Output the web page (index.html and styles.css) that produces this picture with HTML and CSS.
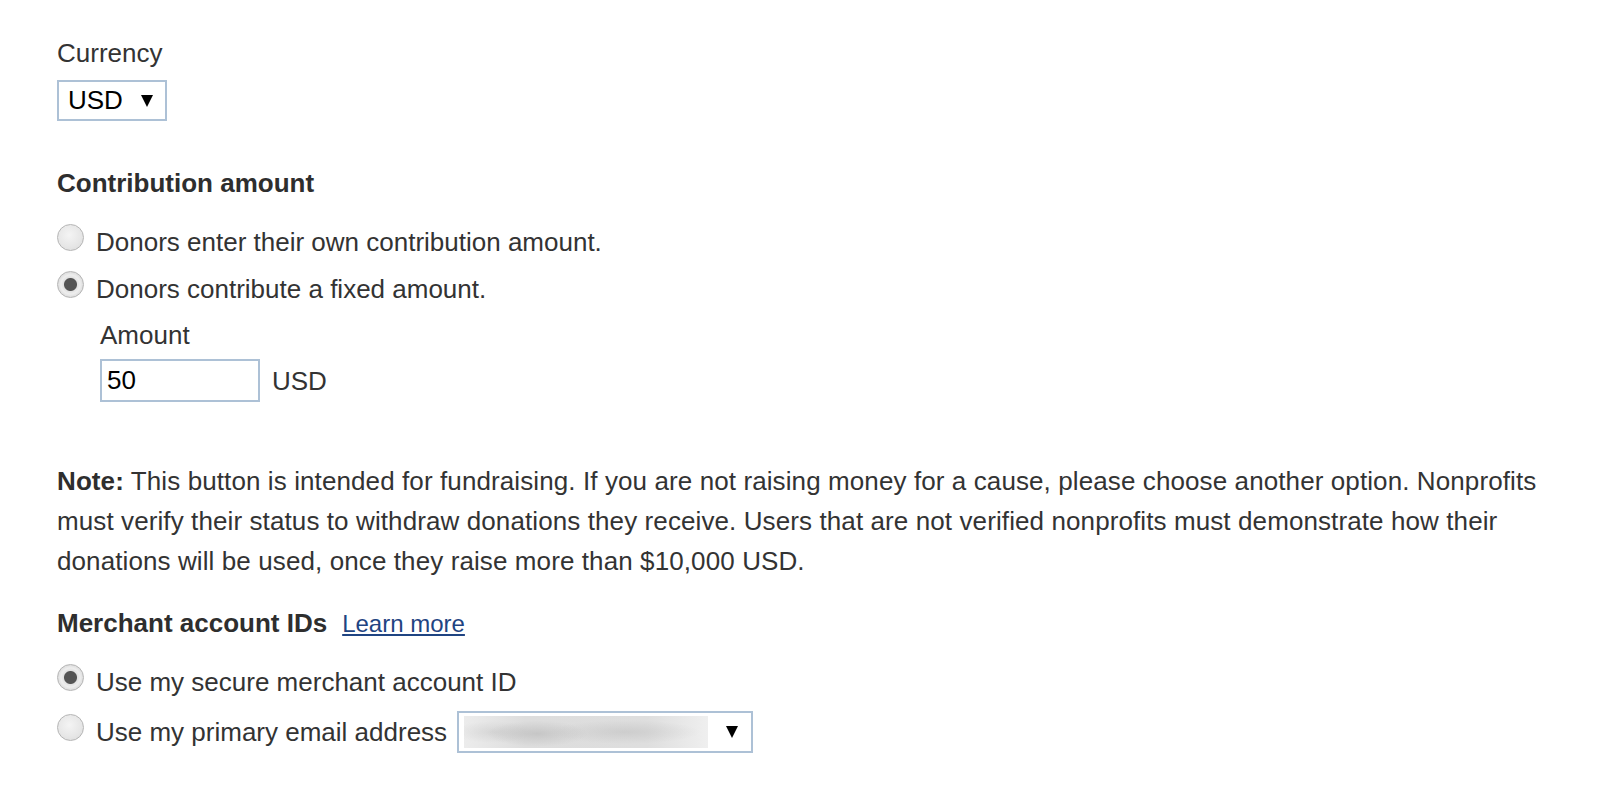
FILE: index.html
```html
<!DOCTYPE html>
<html lang="en">
<head>
<meta charset="utf-8">
<title>Donate button settings</title>
<link rel="stylesheet" href="styles.css">
</head>
<body>
<form class="form">
  <div class="field">
    <div class="label">Currency</div>
    <div class="select select-currency">
      <span class="select-value">USD</span>
      <span class="arrow"></span>
    </div>
  </div>

  <h3 class="heading heading-contrib">Contribution amount</h3>
  <label class="radio-row">
    <input class="radio" type="radio" name="amount">
    <span>Donors enter their own contribution amount.</span>
  </label>
  <label class="radio-row">
    <input class="radio" type="radio" name="amount" checked>
    <span>Donors contribute a fixed amount.</span>
  </label>

  <div class="amount">
    <div class="label">Amount</div>
    <div class="amount-row">
      <div class="text-input">50</div>
      <span class="unit">USD</span>
    </div>
  </div>

  <p class="note"><b>Note:</b> This button is intended for fundraising. If you are not raising money for a cause, please choose another option. Nonprofits must verify their status to withdraw donations they receive. Users that are not verified nonprofits must demonstrate how their donations will be used, once they raise more than $10,000 USD.</p>

  <div class="heading-row">
    <h3 class="heading">Merchant account IDs</h3>
    <a class="link" href="#">Learn more</a>
  </div>
  <label class="radio-row radio-row-first">
    <input class="radio" type="radio" name="merchant" checked>
    <span>Use my secure merchant account ID</span>
  </label>
  <label class="radio-row radio-row-email">
    <input class="radio" type="radio" name="merchant">
    <span>Use my primary email address</span>
    <div class="select select-email">
      <span class="blurred"></span>
      <span class="arrow"></span>
    </div>
  </label>
</form>
</body>
</html>
```

FILE: styles.css
```css
html, body {
  margin: 0;
  padding: 0;
  background: #ffffff;
}

body {
  font-family: "Liberation Sans", Arial, sans-serif;
  font-size: 26px;
  line-height: 30px;
  color: #333333;
}

.form {
  padding: 38px 0 0 57px;
  display: flex;
  flex-direction: column;
  align-items: flex-start;
}

.label {
  line-height: 30px;
}

.select {
  box-sizing: border-box;
  display: flex;
  align-items: center;
  border: 2px solid #adc1d6;
  background: #ffffff;
  color: #000000;
}

.select-currency {
  margin-top: 12px;
  width: 110px;
  height: 41px;
  padding: 0 12px 0 9px;
}

.select-value {
  flex: 1;
  line-height: 37px;
}

.arrow {
  width: 0;
  height: 0;
  border-left: 6px solid transparent;
  border-right: 6px solid transparent;
  border-top: 12px solid #000000;
}

.heading {
  margin: 0;
  font-size: 26px;
  font-weight: bold;
  line-height: 30px;
  color: #2e2e2e;
}

.heading-contrib {
  margin-top: 47px;
  margin-bottom: 12px;
}

.radio-row {
  display: flex;
  align-items: center;
  margin-top: 17px;
  cursor: pointer;
}

.radio {
  appearance: none;
  -webkit-appearance: none;
  box-sizing: border-box;
  width: 27px;
  height: 27px;
  margin: -10px 12px 0 0;
  border-radius: 50%;
  border: 1px solid #b5b5b5;
  background: radial-gradient(circle at 45% 40%, #f4f4f4 0, #e6e6e6 60%, #d6d6d6 100%);
  flex: none;
}

.radio:checked {
  background:
    radial-gradient(circle at 50% 50%, #555555 0, #555555 6px, #e2e2e2 7px, #eeeeee 9.5px, #d8d8d8 13.5px);
}

.amount {
  margin: 16px 0 0 43px;
}

.amount-row {
  display: flex;
  align-items: center;
  margin-top: 9px;
}

.text-input {
  box-sizing: border-box;
  width: 160px;
  height: 43px;
  padding-left: 5px;
  border: 2px solid #adc1d6;
  line-height: 39px;
  color: #000000;
}

.unit {
  margin-left: 12px;
}

.note {
  margin: 59px 0 0;
  max-width: 1500px;
  line-height: 40px;
  letter-spacing: 0.1px;
}

.note b {
  color: #2e2e2e;
}

.heading-row {
  display: flex;
  align-items: baseline;
  margin-top: 27px;
  margin-bottom: 11px;
}

.link {
  margin-left: 15px;
  font-size: 24px;
  color: #1f4482;
  text-decoration: underline;
}

.radio-row-email {
  margin-top: 14px;
}

.select-email {
  margin-left: 10px;
  width: 296px;
  height: 42px;
  padding: 3px 13px 3px 5px;
  align-items: stretch;
}

.select-email .arrow {
  align-self: center;
  margin-left: 18px;
}

.blurred {
  flex: 1;
  background:
    radial-gradient(ellipse 50px 13px at 30% 55%, rgba(175,175,175,0.5), rgba(175,175,175,0) 100%),
    radial-gradient(ellipse 75px 12px at 66% 50%, rgba(180,180,180,0.4), rgba(180,180,180,0) 100%),
    radial-gradient(ellipse 40px 11px at 12% 50%, rgba(185,185,185,0.35), rgba(185,185,185,0) 100%),
    linear-gradient(90deg, #ececec 0%, #dddddd 25%, #dedede 75%, #efefef 100%);
}
```
